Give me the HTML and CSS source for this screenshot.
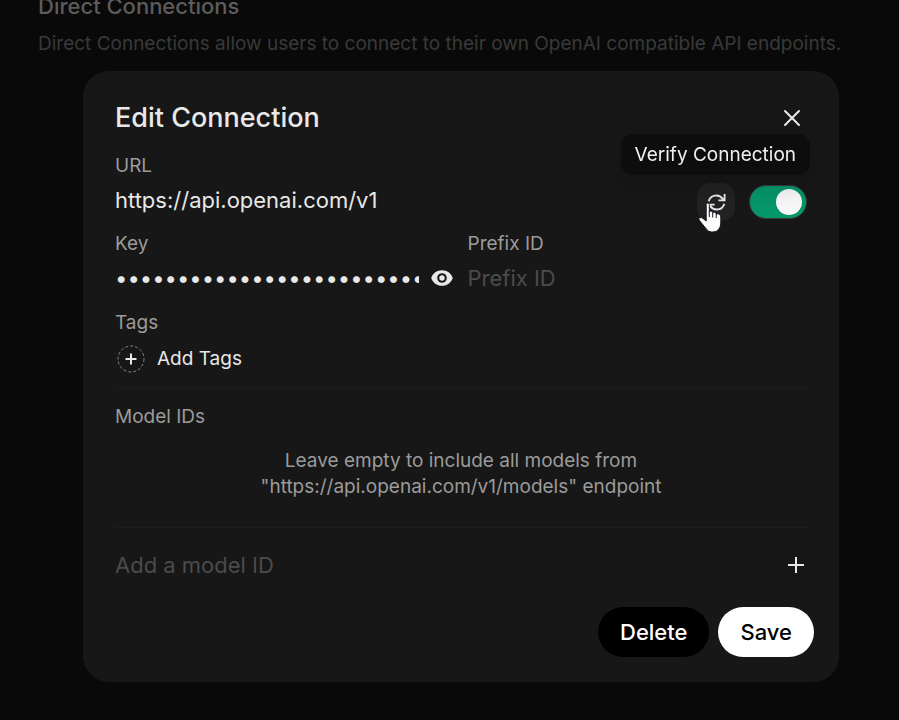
FILE: index.html
```html
<!DOCTYPE html>
<html lang="en">
<head>
<meta charset="utf-8">
<meta name="viewport" content="width=device-width, initial-scale=1">
<title>Edit Connection</title>
<link rel="stylesheet" href="styles.css">
</head>
<body>
<main class="settings">
  <h2 class="settings-title">Direct Connections</h2>
  <p class="settings-text">Direct Connections allow users to connect to their own OpenAI compatible API endpoints.</p>
</main>

<div class="overlay">
  <form class="modal" role="dialog" aria-labelledby="modal-title">
    <header class="modal-header">
      <h1 class="modal-title" id="modal-title">Edit Connection</h1>
      <button class="icon-button" type="button" aria-label="Close">
        <svg class="icon-close" viewBox="0 0 18 18"><path d="M2 2l14 14M16 2L2 16"/></svg>
      </button>
    </header>

    <div class="url-row">
      <div class="field">
        <label class="label" for="url">URL</label>
        <input class="input" id="url" type="text" value="https://api.openai.com/v1">
      </div>
      <div class="url-actions">
        <div class="verify">
          <button class="verify-button" type="button" aria-describedby="verify-tip" aria-label="Verify Connection">
            <svg class="icon-refresh" viewBox="0 0 20 20"><path d="M1.8 8.8A8.2 8.2 0 0 1 16.500 6.200L18 7.800M18.500 1v6.800h-6.500M18.200 11.200A8.200 8.200 0 0 1 3.500 13.800L2 12.200M1.500 19v-6.800h6.500"/></svg>
          </button>
          <span class="tooltip" id="verify-tip" role="tooltip">Verify Connection</span>
          <svg class="pointer" viewBox="0 0 24 31"><path d="M8.200 2.500Q8.200 1 9.700 1T11.300 2.500V10.500Q11.500 8.800 13 8.900T14.700 10.500V11.500Q15 10 16.500 10.200T18.200 11.900V12.800Q18.500 11.500 20 11.700Q22.800 12 22.800 15V21Q22.800 25 20.500 27.500Q18.500 30 15 30H13.500Q10.500 30 8.300 27L1.500 18.500Q0 16.500 1.700 15.700Q3.300 15 5 16.500L8.200 19Z"/><path class="fingers" d="M11.300 10.500V15M14.700 11.500V15.500M18.200 12.800V16"/></svg>
        </div>
        <input class="switch" type="checkbox" role="switch" aria-label="Connection enabled" checked>
      </div>
    </div>

    <div class="key-row">
      <div class="field">
        <label class="label" for="key">Key</label>
        <div class="key-box">
          <input class="input key-input" id="key" type="password" value="sk-0000000000000000000000000000">
          <button class="icon-button" type="button" aria-label="Show key">
            <svg class="icon-eye" viewBox="0 0 22 16"><path fill-rule="evenodd" d="M11 .2C5.800.2 1.800 3.400.4 7.500a1.500 1.500 0 0 0 0 1C1.800 12.600 5.800 15.800 11 15.800s9.200-3.200 10.600-7.300a1.500 1.500 0 0 0 0-1C20.200 3.400 16.200.2 11 .2ZM15.800 8a4.800 4.800 0 1 1-9.600 0 4.800 4.800 0 0 1 9.600 0Z"/><circle cx="11" cy="8" r="2.700"/></svg>
          </button>
        </div>
      </div>
      <div class="field">
        <label class="label" for="prefix">Prefix ID</label>
        <input class="input" id="prefix" type="text" placeholder="Prefix ID">
      </div>
    </div>

    <section class="tags">
      <h2 class="label">Tags</h2>
      <button class="add-tags" type="button">
        <svg class="icon-tag" viewBox="0 0 28 28"><circle cx="14" cy="14" r="13"/><path d="M14 8.500v11M8.500 14h11"/></svg>
        <span>Add Tags</span>
      </button>
    </section>

    <section class="models">
      <h2 class="label">Model IDs</h2>
      <p class="models-empty">Leave empty to include all models from<br>"https://api.openai.com/v1/models" endpoint</p>
    </section>

    <div class="model-row">
      <input class="input" type="text" placeholder="Add a model ID" aria-label="Model ID">
      <button class="icon-button" type="button" aria-label="Add model">
        <svg class="icon-plus" viewBox="0 0 16 16"><path d="M8 0v16M0 8h16"/></svg>
      </button>
    </div>

    <footer class="modal-footer">
      <button class="button button-delete" type="button">Delete</button>
      <button class="button button-save" type="submit">Save</button>
    </footer>
  </form>
</div>
</body>
</html>
```
FILE: styles.css
```css
* {
  box-sizing: border-box;
}

body {
  margin: 0;
  background: #090909;
  color: #e8e8e8;
  font-family: Inter, "Liberation Sans", sans-serif;
  font-size: 19px;
  line-height: 24px;
  overflow: hidden;
}

h1,
h2,
p {
  margin: 0;
}

button,
input {
  margin: 0;
  padding: 0;
  border: 0;
  outline: 0;
  background: none;
  color: inherit;
  font: inherit;
}

svg {
  display: block;
  flex: none;
  fill: none;
  stroke: currentColor;
}

.settings {
  margin-top: -8px;
  padding: 0 38px;
}

.settings-title {
  color: #5c5c5c;
  font-size: 22px;
  font-weight: 500;
  line-height: 28px;
}

.settings-text {
  margin-top: 12px;
  color: #393939;
  white-space: nowrap;
}

.overlay {
  position: fixed;
  inset: 0;
  padding: 71px 60px 38px 83px;
}

.modal {
  padding: 24px 32px 25px;
  border-radius: 26px;
  background: #171717;
}

.modal-header {
  display: flex;
  align-items: center;
  justify-content: space-between;
  height: 46px;
  padding-right: 6px;
}

.modal-title {
  font-size: 27px;
  font-weight: 500;
}

.icon-button {
  flex: none;
}

.icon-close {
  width: 18px;
  height: 18px;
  stroke-width: 2;
  stroke-linecap: round;
}

.label {
  display: block;
  color: #9b9b9b;
  font-size: 19px;
  font-weight: 400;
  line-height: 24px;
}

.field {
  flex: 1;
  min-width: 0;
}

.input {
  display: block;
  width: 100%;
  height: 32px;
  margin-top: 6px;
  font-size: 22px;
}

.input::placeholder {
  color: #4b4b4b;
  opacity: 1;
}

.url-row {
  display: flex;
  align-items: flex-end;
  margin-top: 13px;
}

.url-row .field {
  padding-bottom: 5px;
}

.url-actions {
  display: flex;
  align-items: center;
  gap: 14px;
}

.verify {
  position: relative;
}

.verify-button {
  display: grid;
  place-items: center;
  width: 38px;
  height: 38px;
  border-radius: 13px;
  background: #222222;
}

.icon-refresh {
  width: 19px;
  height: 19px;
  stroke-width: 2;
}

.tooltip {
  position: absolute;
  right: -75px;
  bottom: 46px;
  padding: 8px 14px;
  border-radius: 12px;
  background: #0d0d0d;
  box-shadow: 0 12px 24px rgba(0, 0, 0, 0.15);
  color: #f0f0f0;
  line-height: 25px;
  white-space: nowrap;
}

.pointer {
  position: absolute;
  top: 19px;
  left: 1px;
  width: 24px;
  height: 31px;
  fill: #ffffff;
  stroke: #171725;
}

.fingers {
  stroke-width: 1;
}

.switch {
  display: flex;
  align-items: center;
  justify-content: flex-end;
  width: 58px;
  height: 34px;
  padding: 0 4px;
  border: 1px solid #3a3a3a;
  border-radius: 17px;
  background: #059669;
  appearance: none;
}

.switch::before {
  width: 26px;
  height: 26px;
  border-radius: 50%;
  background: #f7f7f7;
  content: "";
}

.key-row {
  display: grid;
  grid-template-columns: 1fr 1fr;
  gap: 13px;
  margin-top: 11px;
}

.key-box {
  display: flex;
  align-items: center;
  gap: 12px;
  margin-top: 6px;
  padding-right: 2px;
}

.key-input {
  margin-top: 0;
}

.icon-eye {
  width: 22px;
  height: 16px;
  fill: currentColor;
  stroke: none;
}

.tags {
  margin-top: 17px;
}

.add-tags {
  display: flex;
  align-items: center;
  gap: 12px;
  margin-top: 10px;
  padding-left: 2px;
}

.icon-tag {
  width: 28px;
  height: 28px;
  stroke-width: 2;
}

.icon-tag circle {
  stroke: #858585;
  stroke-width: 1;
  stroke-dasharray: 3 2;
}

.models {
  margin: 15px 0 21px;
  padding: 16px 0 27px;
  border: solid #1e1e1e;
  border-width: 1px 0;
}

.models-empty {
  margin-top: 19px;
  color: #9b9b9b;
  line-height: 26px;
  text-align: center;
}

.model-row {
  display: flex;
  align-items: center;
  padding-right: 3px;
}

.model-row .input {
  margin: 0;
}

.icon-plus {
  width: 16px;
  height: 16px;
  stroke-width: 2;
}

.modal-footer {
  display: flex;
  justify-content: flex-end;
  gap: 9px;
  margin: 26px -7px 0 0;
}

.button {
  height: 50px;
  padding: 0 22px;
  border-radius: 25px;
  font-size: 22px;
  font-weight: 500;
}

.button-delete {
  background: #000000;
  color: #ffffff;
}

.button-save {
  background: #ffffff;
  color: #000000;
}
```
